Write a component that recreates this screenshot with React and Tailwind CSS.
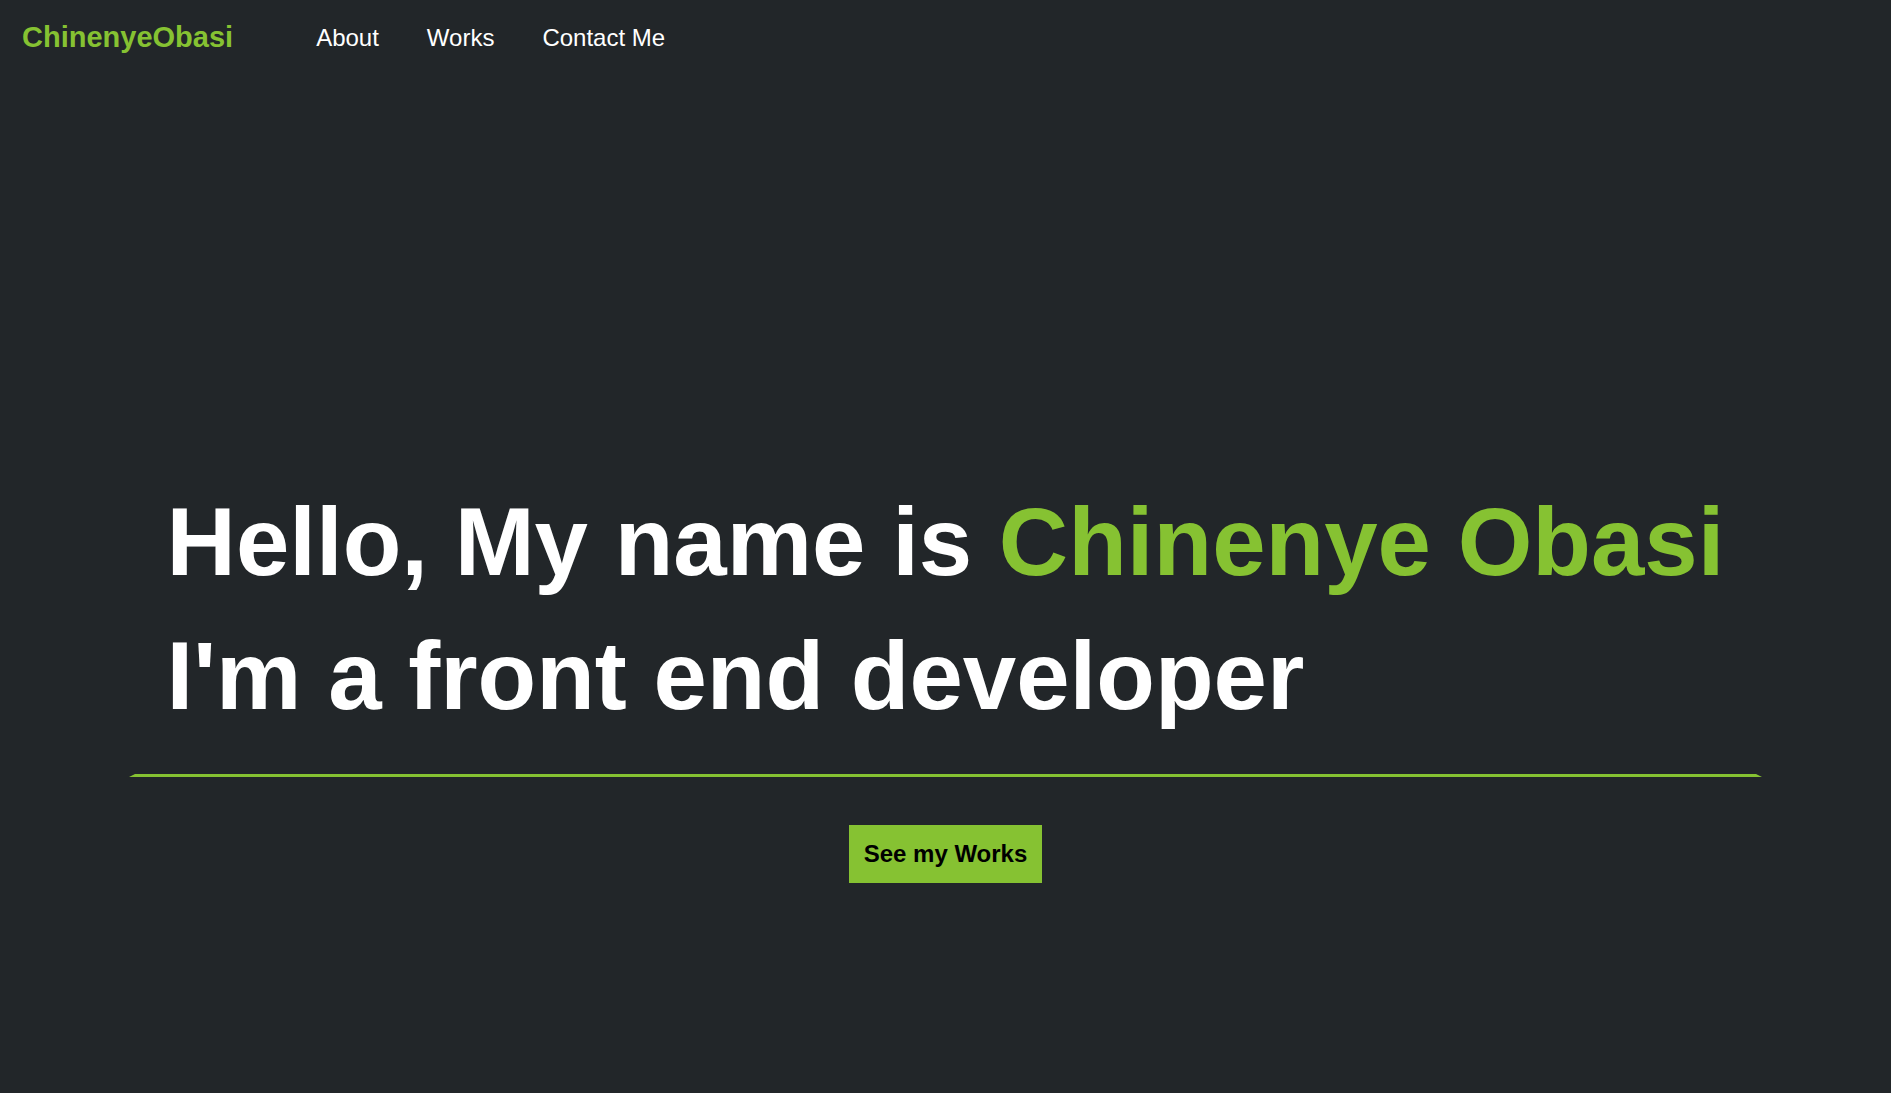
export default function App() {
  return (
    <div className="flex min-h-screen flex-col bg-[#222629] font-['Liberation_Sans',Arial,sans-serif] text-white">
      <header className="flex h-19 items-center px-[22px]">
        <a href="#home" className="text-[29px] font-bold text-[#86c232]">ChinenyeObasi</a>
        <nav className="ml-[83px] flex gap-12 text-2xl">
          <a href="#about">About</a>
          <a href="#works">Works</a>
          <a href="#contact">Contact Me</a>
        </nav>
      </header>
      <main id="home" className="flex grow flex-col items-center pt-[399px]">
        <h1 className="border-x-[6px] border-b-[3px] border-x-transparent border-b-[#86c232] px-8 pb-[31px] text-[96px] leading-[134px] font-bold">
          Hello, My name is <span className="text-[#86c232]">Chinenye Obasi</span>
          <br />
          I'm a front end developer
        </h1>
        <button type="button" className="mt-12 h-[58px] bg-[#86c232] px-[15px] text-2xl font-bold text-black">See my Works</button>
      </main>
    </div>
  );
}
